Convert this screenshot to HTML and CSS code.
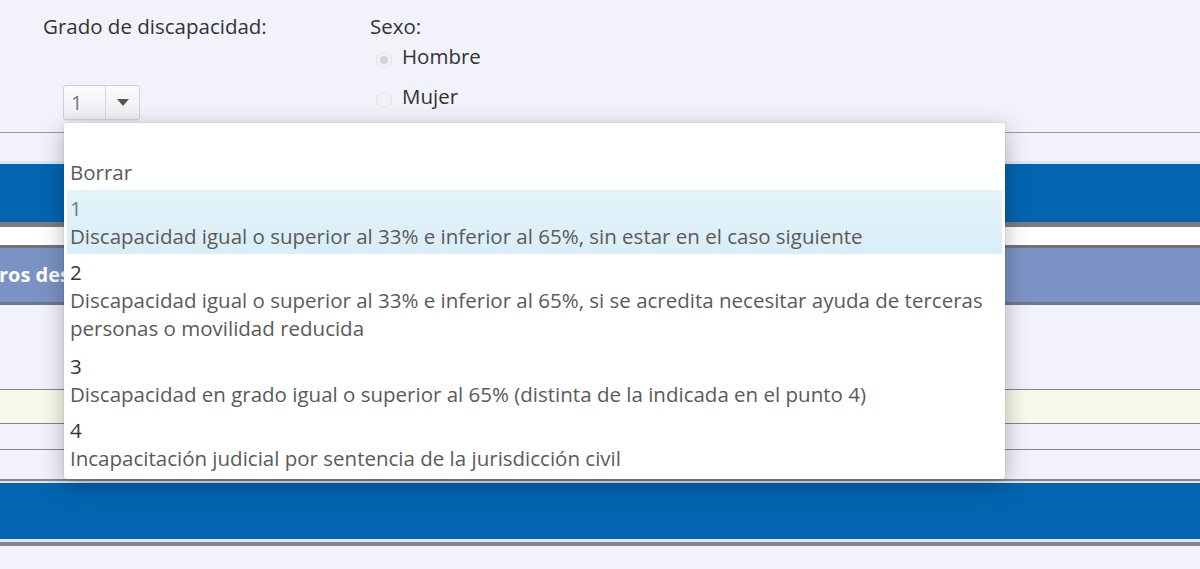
FILE: index.html
```html
<!DOCTYPE html>
<html lang="es">
<head>
<meta charset="utf-8">
<link rel="stylesheet" href="styles.css">
</head>
<body>
<div class="page">
  <section class="top">
    <div class="field grado">
      <div class="label">Grado de discapacidad:</div>
      <div class="select">
        <span class="sel-value">1</span>
        <span class="sel-arrow"><svg width="12" height="8" viewBox="0 0 12 8"><path d="M0 0 H12 L6 7 Z" fill="#555"/></svg></span>
      </div>
    </div>
    <div class="field sexo">
      <div class="label">Sexo:</div>
      <label class="radio"><span class="dot checked"></span>Hombre</label>
      <label class="radio"><span class="dot"></span>Mujer</label>
    </div>
  </section>
  <div class="gap1"></div>
  <div class="band blue"></div>
  <div class="sep-white"></div>
  <div class="band slate"><span class="band-text">ros des</span></div>
  <div class="row r1"></div>
  <div class="row yellow"></div>
  <div class="row r2"></div>
  <div class="row r3"></div>
  <div class="band blue bottom"></div>
  <div class="under"></div>
  <div class="rest"></div>

  <ul class="dropdown">
    <li class="opt empty"></li>
    <li class="opt"><span class="desc">Borrar</span></li>
    <li class="opt active"><span class="num light">1</span><span class="desc">Discapacidad igual o superior al 33% e inferior al 65%, sin estar en el caso siguiente</span></li>
    <li class="opt tall"><span class="num">2</span><span class="desc">Discapacidad igual o superior al 33% e inferior al 65%, si se acredita necesitar ayuda de terceras personas o movilidad reducida</span></li>
    <li class="opt"><span class="num">3</span><span class="desc">Discapacidad en grado igual o superior al 65% (distinta de la indicada en el punto 4)</span></li>
    <li class="opt"><span class="num">4</span><span class="desc">Incapacitación judicial por sentencia de la jurisdicción civil</span></li>
  </ul>
</div>
</body>
</html>
```

FILE: styles.css
```css
* { box-sizing: border-box; }
html, body { margin: 0; padding: 0; }
body {
  background: #f1f2fa;
  font-family: "Open Sans", "Lato", sans-serif;
  color: #333;
  width: 1200px;
  height: 569px;
  overflow: hidden;
}
.page { position: relative; width: 1200px; height: 569px; }

.top {
  height: 133px;
  border-bottom: 1px solid #9a9aa4;
  display: flex;
  padding-left: 43px;
}
.field .label { font-size: 20.5px; line-height: 24px; color: #333; padding-top: 14px; }
.grado { width: 327px; }
.select {
  margin: 47px 0 0 20px;
  width: 77px;
  height: 35px;
  display: flex;
  border: 1px solid #cfd0d6;
  border-radius: 3px;
  background: linear-gradient(#fbfbfd, #eeeff3);
  box-shadow: 0 1px 1px rgba(0,0,0,0.06);
}
.sel-value {
  width: 42px;
  border-right: 1px solid #d6d7dc;
  font-size: 20px;
  line-height: 33px;
  color: #777;
  padding-left: 7px;
}
.sel-arrow { flex: 1; display: flex; align-items: center; justify-content: center; }
.sexo .radio {
  display: flex;
  align-items: center;
  font-size: 20.5px;
  color: #333;
  height: 24px;
  margin-top: 6px;
  margin-left: 6px;
}
.sexo .radio + .radio { margin-top: 16px; }
.dot {
  width: 16px; height: 16px;
  border-radius: 50%;
  border: 1px solid #e2e2e8;
  background: #f3f3f6;
  margin-right: 10px;
  margin-top: 8px;
  position: relative;
}
.dot.checked::after {
  content: "";
  position: absolute;
  left: 3px; top: 3px;
  width: 8px; height: 8px;
  border-radius: 50%;
  background: #d3d3d8;
}

.gap1 { height: 28px; }
.band.blue {
  height: 66px;
  background: #0365b0;
  border-top: 3px solid #d8e8f6;
  border-bottom: 5px solid #7c7c82;
}
.sep-white { height: 21px; background: #ffffff; border-bottom: 3px solid #727278; }
.band.slate {
  height: 57px;
  background: #7b93c4;
  border-bottom: 3px solid #6e7790;
  color: #fff;
  font-weight: 700;
  font-size: 20px;
  line-height: 54px;
}
.band-text { display: block; margin-left: -1px; }
.row { border-bottom: 1px solid #85858d; }
.r1 { height: 85px; }
.yellow { height: 34px; background: #f9f9e9; }
.r2 { height: 26px; }
.r3 { height: 31px; border-bottom: 2px solid #85858d; }
.band.bottom { height: 58px; border-top: 2px solid #d8e8f6; border-bottom: 0; }
.under { height: 7px; border-top: 3px solid #dde8f3; background: #8a7f8c; }
.rest { height: 40px; }

.dropdown {
  position: absolute;
  left: 64px;
  top: 123px;
  width: 941px;
  height: 356px;
  margin: 0;
  padding: 0 3px;
  list-style: none;
  background: #fff;
  border-radius: 3px;
  box-shadow: 0 6px 24px rgba(0,0,0,0.28), 0 0 2px rgba(0,0,0,0.15);
  font-size: 20.5px;
  line-height: 28px;
}
.opt { padding: 4px 3px; color: #555; }
.opt.tall { padding-bottom: 6px; }
.opt.empty { height: 31px; padding: 0; }
.opt.active { background: linear-gradient(#e4f3fa, #d9eef7); }
.num { display: block; color: #333; }
.num.light { color: #777; }
.desc { display: block; color: #5a5a5a; }
```
